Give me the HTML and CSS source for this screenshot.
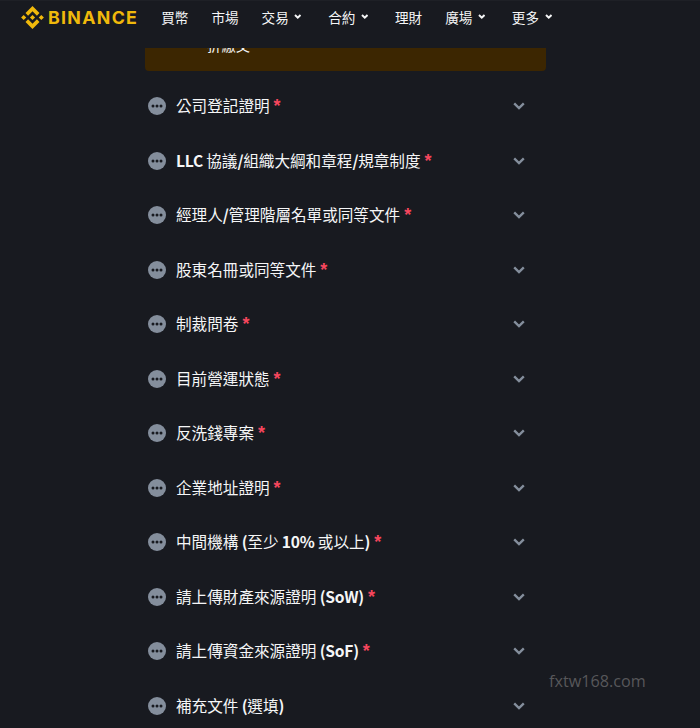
FILE: index.html
```html
<!DOCTYPE html>
<html lang="zh-Hant">
<head>
<meta charset="utf-8">
<title>Binance</title>
<link rel="stylesheet" href="styles.css">
</head>
<body>
<svg class="defs" width="0" height="0" aria-hidden="true">
  <symbol id="chev" viewBox="0 0 12 8"><path d="M1.2 1.4 6 6 10.8 1.4" fill="none" stroke="currentColor" stroke-width="2.4"/></symbol>
  <symbol id="chev-s" viewBox="0 0 12 8"><path d="M1.6 1.6 6 5.8 10.4 1.6" fill="none" stroke="currentColor" stroke-width="3.2"/></symbol>
  <symbol id="dots" viewBox="0 0 18 18"><circle cx="9" cy="9" r="9" fill="#848e9c"/><circle cx="5" cy="9" r="1.5" fill="#181a20"/><circle cx="9" cy="9" r="1.5" fill="#181a20"/><circle cx="13" cy="9" r="1.5" fill="#181a20"/></symbol>
</svg>
<header class="header">
  <a class="brand">
    <svg class="brand-icon" viewBox="0 0 24 24"><path fill="#f0b90b" d="M7.4 10.1 12 5.5l4.6 4.6 2.7-2.7L12 .1 4.7 7.4zM.1 12l2.7-2.7L5.5 12l-2.7 2.7zM7.4 13.9 12 18.5l4.6-4.6 2.7 2.7L12 23.9l-7.3-7.3zM18.5 12l2.7-2.7 2.7 2.7-2.7 2.7zM14.7 12 12 9.3 9.3 12l2.7 2.7z"/></svg>
    <span class="brand-name">BINANCE</span>
  </a>
  <nav class="nav">
    <span class="nav-item">買幣</span>
    <span class="nav-item">市場</span>
    <span class="nav-item">交易<svg class="nav-chev"><use href="#chev-s"/></svg></span>
    <span class="nav-item">合約<svg class="nav-chev"><use href="#chev-s"/></svg></span>
    <span class="nav-item">理財</span>
    <span class="nav-item">廣場<svg class="nav-chev"><use href="#chev-s"/></svg></span>
    <span class="nav-item">更多<svg class="nav-chev"><use href="#chev-s"/></svg></span>
  </nav>
</header>
<main class="main">
  <div class="notice"><p class="notice-text">折繳交。</p></div>
  <ul class="list">
    <li class="row"><svg class="row-icon"><use href="#dots"/></svg><span class="row-label">公司登記證明<span class="req">*</span></span><svg class="row-chev"><use href="#chev"/></svg></li>
    <li class="row"><svg class="row-icon"><use href="#dots"/></svg><span class="row-label"><b class="lat">LLC </b>協議<b class="lat">/</b>組織大綱和章程<b class="lat">/</b>規章制度<span class="req">*</span></span><svg class="row-chev"><use href="#chev"/></svg></li>
    <li class="row"><svg class="row-icon"><use href="#dots"/></svg><span class="row-label">經理人<b class="lat">/</b>管理階層名單或同等文件<span class="req">*</span></span><svg class="row-chev"><use href="#chev"/></svg></li>
    <li class="row"><svg class="row-icon"><use href="#dots"/></svg><span class="row-label">股東名冊或同等文件<span class="req">*</span></span><svg class="row-chev"><use href="#chev"/></svg></li>
    <li class="row"><svg class="row-icon"><use href="#dots"/></svg><span class="row-label">制裁問卷<span class="req">*</span></span><svg class="row-chev"><use href="#chev"/></svg></li>
    <li class="row"><svg class="row-icon"><use href="#dots"/></svg><span class="row-label">目前營運狀態<span class="req">*</span></span><svg class="row-chev"><use href="#chev"/></svg></li>
    <li class="row"><svg class="row-icon"><use href="#dots"/></svg><span class="row-label">反洗錢專案<span class="req">*</span></span><svg class="row-chev"><use href="#chev"/></svg></li>
    <li class="row"><svg class="row-icon"><use href="#dots"/></svg><span class="row-label">企業地址證明<span class="req">*</span></span><svg class="row-chev"><use href="#chev"/></svg></li>
    <li class="row"><svg class="row-icon"><use href="#dots"/></svg><span class="row-label">中間機構<b class="lat"> (</b>至少<b class="lat"> 10% </b>或以上<b class="lat">)</b><span class="req">*</span></span><svg class="row-chev"><use href="#chev"/></svg></li>
    <li class="row"><svg class="row-icon"><use href="#dots"/></svg><span class="row-label">請上傳財產來源證明<b class="lat"> (SoW)</b><span class="req">*</span></span><svg class="row-chev"><use href="#chev"/></svg></li>
    <li class="row"><svg class="row-icon"><use href="#dots"/></svg><span class="row-label">請上傳資金來源證明<b class="lat"> (SoF)</b><span class="req">*</span></span><svg class="row-chev"><use href="#chev"/></svg></li>
    <li class="row"><svg class="row-icon"><use href="#dots"/></svg><span class="row-label">補充文件<b class="lat"> (</b>選填<b class="lat">)</b></span><svg class="row-chev"><use href="#chev"/></svg></li>
  </ul>
</main>
<div class="watermark">fxtw168.com</div>
</body>
</html>
```

FILE: styles.css
```css
* { box-sizing: border-box; }
html, body { height: 100%; }
body {
  margin: 0;
  overflow: hidden;
  background: #181a20;
  color: #eaecef;
  font-family: "Liberation Sans", "Noto Sans CJK TC", sans-serif;
  position: relative;
}
.defs { position: absolute; }
.header {
  height: 48px;
  display: flex;
  align-items: center;
  padding: 0 0 14px 21px;
  border-top: 1px solid #1e2026;
}
.brand { display: flex; align-items: center; gap: 4px; }
.brand-icon { width: 23px; height: 23px; display: block; }
.brand-name {
  font-family: Inter, "Liberation Sans", sans-serif;
  font-weight: 700;
  font-size: 17.8px;
  line-height: 23px;
  letter-spacing: 1.3px;
  color: #f0b90b;
}
.nav { display: flex; gap: 23px; margin: 0 0 2px 23px; }
.nav-item {
  display: flex;
  align-items: center;
  font-family: "Noto Sans CJK TC", sans-serif;
  font-size: 13.6px;
  font-weight: 400;
  line-height: 20px;
  color: #f5f6f7;
}
.nav-chev { width: 7.5px; height: 5px; margin: 0 3.5px 0 5.5px; display: block; }
.main { width: 401px; margin-left: 145px; }
.notice {
  height: 23px;
  overflow: hidden;
  background: #3c2601;
  border-radius: 0 0 4px 4px;
  padding-left: 62px;
}
.notice-text {
  margin: -15px 0 0;
  font-family: "Noto Sans CJK TC", sans-serif;
  font-size: 14.4px;
  font-weight: 400;
  line-height: 24px;
  color: #f5f6f7;
}
.list { list-style: none; margin: 22.75px 0 0; padding: 0 21px 0 3px; }
.row {
  height: 24.5px;
  margin-bottom: 30px;
  display: flex;
  align-items: center;
}
.row-icon { width: 18px; height: 18px; flex: none; display: block; }
.row-label {
  flex: 1;
  margin-left: 10px;
  padding-bottom: 2px;
  font-family: "Noto Sans CJK TC", sans-serif;
  font-size: 15.6px;
  font-weight: 400;
  line-height: 24px;
  color: #f5f6f7;
}
.lat { font-weight: 700; letter-spacing: -0.25px; }
.req {
  margin-left: 4px;
  font-family: "Liberation Sans", sans-serif;
  font-size: 18px;
  line-height: 1;
  font-weight: 700;
  color: #f6465d;
}
.row-chev { width: 12px; height: 8px; color: #848e9c; flex: none; display: block; }
.watermark {
  position: absolute;
  left: 549px;
  top: 670px;
  font-family: "Open Sans", sans-serif;
  font-size: 16.2px;
  line-height: 22px;
  color: #57575a;
}
```
